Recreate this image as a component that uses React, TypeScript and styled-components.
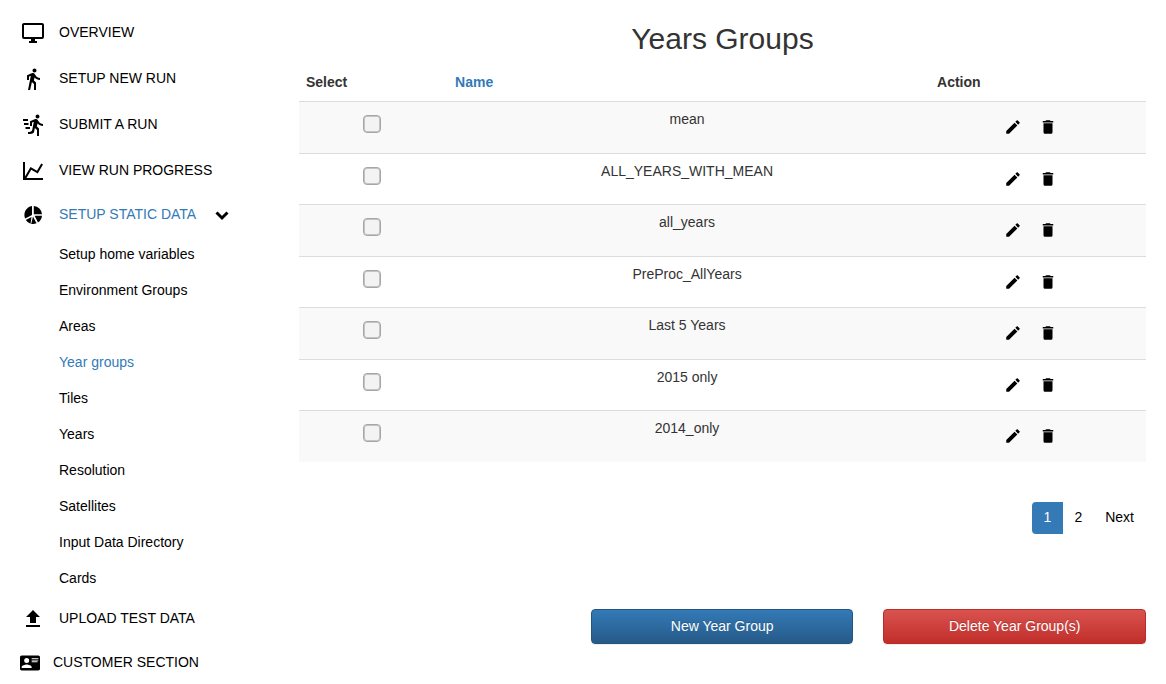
import React from "react";
import styled, { createGlobalStyle } from "styled-components";

const GlobalStyle = createGlobalStyle`
  *, *::before, *::after { box-sizing: border-box; }
  body {
    margin: 0;
    background: #fff;
    color: #333;
    font: 14px/20px "Liberation Sans", Arial, sans-serif;
  }
  a { color: inherit; text-decoration: none; }
`;

const Page = styled.div`
  display: flex;
  padding: 0 20px;
  gap: 28px;
`;

const IconBox = styled.svg<{ $size: number }>`
  display: block;
  flex: none;
  width: ${(p) => p.$size}px;
  height: ${(p) => p.$size}px;
  fill: #000;
`;

const Sidebar = styled.nav`
  flex: 0 0 251px;
  padding-top: 9px;
  color: #000;
`;

const menuHeights = { regular: 46, medium: 44, compact: 42 };

const MenuLink = styled.a<{
  $active?: boolean;
  $outdent?: boolean;
  $density?: keyof typeof menuHeights;
}>`
  display: flex;
  align-items: center;
  height: ${(p) => menuHeights[p.$density ?? "regular"]}px;
  gap: ${(p) => (p.$outdent ? 13 : 14)}px;
  padding-left: ${(p) => (p.$outdent ? 0 : 1)}px;
  && { color: ${(p) => (p.$active ? "#337ab7" : "#000")}; }
  svg { margin-top: 2px; }
`;

const Chevron = styled.svg`
  width: 14px;
  height: 14px;
  margin-left: 5px;
  fill: none;
  stroke: #000;
  stroke-width: 3;
`;

const SubMenu = styled.ul`
  margin: 1px 0 0;
  padding: 0 0 0 39px;
  list-style: none;
`;

const SubItem = styled.li<{ $active?: boolean }>`
  padding: 8px 0;
  color: ${(p) => (p.$active ? "#337ab7" : "#000")};
`;

const Main = styled.main`
  flex: 1;
  min-width: 0;
`;

const Title = styled.h2`
  margin: 22px 0 10px;
  font-size: 30px;
  font-weight: 400;
  line-height: 33px;
  text-align: center;
`;

const DataTable = styled.table`
  width: 100%;
  table-layout: fixed;
  border-collapse: separate;
  border-spacing: 0;
`;

const Head = styled.th<{ $width?: string }>`
  width: ${(p) => p.$width ?? "auto"};
  padding: 7px 7px 9px;
  text-align: left;
  a { color: #337ab7; }
`;

const Row = styled.tr`
  height: 51px;
  &:nth-child(odd) {
    height: 52px;
    background: #f9f9f9;
  }
`;

const Cell = styled.td`
  padding: 7px 12px 0 8px;
  border-top: 1px solid #ddd;
  text-align: center;
  vertical-align: top;
`;

const Check = styled.input`
  appearance: none;
  display: block;
  width: 18px;
  height: 18px;
  margin: 6px auto 0;
  border: 1px solid #a6a6a6;
  border-radius: 4px;
  background: #f3f3f3;
  box-shadow: inset 0 0 0 1px #c4c4c4;
  &:checked { background: #337ab7; }
`;

const Actions = styled.div`
  display: flex;
  justify-content: center;
  gap: 17px;
  padding: 9px 12px 0 0;
`;

const IconButton = styled.button`
  padding: 0;
  border: 0;
  background: none;
  cursor: pointer;
`;

const Pager = styled.nav`
  display: flex;
  justify-content: flex-end;
  margin-top: 40px;
`;

const PageLink = styled.a<{ $current?: boolean }>`
  margin-left: -1px;
  padding: 5px 12px 7px;
  border-radius: 4px 0 0 4px;
  && { color: ${(p) => (p.$current ? "#fff" : "#000")}; }
  background: ${(p) => (p.$current ? "#337ab7" : "transparent")};
`;

const ButtonRow = styled.div`
  display: grid;
  grid-template-columns: repeat(2, 31%);
  justify-content: end;
  gap: 30px;
  margin-top: 75px;
`;

const ActionButton = styled.button<{ $danger?: boolean }>`
  height: 35px;
  padding: 0 12px 1px;
  border: 1px solid ${(p) => (p.$danger ? "#b92c28" : "#245580")};
  border-radius: 4px;
  background: ${(p) =>
    p.$danger
      ? "linear-gradient(#d9534f, #c12e2a)"
      : "linear-gradient(#337ab7, #265a88)"};
  box-shadow: 0 1px 1px rgba(0, 0, 0, 0.075);
  color: #fff;
  font: inherit;
  text-shadow: 0 -1px 0 rgba(0, 0, 0, 0.2);
  cursor: pointer;
`;

const paths = {
  monitor:
    "M21,16H3V4H21M21,2H3C1.89,2 1,2.89 1,4V16A2,2 0 0,0 3,18H10V20H8V22H16V20H14V18H21A2,2 0 0,0 23,16V4C23,2.89 22.1,2 21,2Z",
  walk:
    "M13.5 5.5c1.1 0 2-.9 2-2s-.9-2-2-2-2 .9-2 2 .9 2 2 2zM9.8 8.9L7 23h2.1l1.8-8 2.1 2v6h2v-7.5l-2.1-2 .6-3C14.8 12 16.8 13 19 13v-2c-1.9 0-3.5-1-4.3-2.4l-1-1.6c-.4-.6-1-1-1.7-1-.3 0-.5.1-.8.1L6 8.3V13h2V9.6l1.8-.7",
  run:
    "M16.5,5.5A2,2 0 0,0 18.5,3.5A2,2 0 0,0 16.5,1.5A2,2 0 0,0 14.5,3.5A2,2 0 0,0 16.5,5.5M12.9,19.4L13.9,15L16,17V23H18V15.5L15.9,13.5L16.5,10.5C17.89,12.09 19.89,13 22,13V11C20.24,11.03 18.6,10.11 17.7,8.6L16.7,7C16.34,6.4 15.7,6 15,6C14.7,6 14.5,6.1 14.2,6.1L9,8.3V13H11V9.6L12.8,8.9L11.2,17Q10.5,19 7,19V21Q11.5,21 12.9,19.4M2,6H7V8H2ZM3,10H7.5V12H3ZM4.5,14H9V16H4.5Z",
  line:
    "M16,11.78L20.24,4.45L21.97,5.45L16.74,14.5L10.23,10.75L5.46,19H22V21H2V3H4V17.54L9.5,8L16,11.78Z",
  pie:
    "M12.8 3A9 9 0 0 1 21 11.2H12.8ZM11 3V12L4.2 15.6A9 9 0 0 1 11 3ZM4.8 17L10.5 14L9.5 20.7A9 9 0 0 1 4.8 17ZM12 13.6L15.5 20.3A9 9 0 0 1 10.2 20.9ZM13.6 12.8H21A9 9 0 0 1 17 19.5Z",
  upload: "M9,16V10H5L12,3L19,10H15V16H9M5,20V18H19V20H5Z",
  card:
    "M2,3H22C23.05,3 24,3.95 24,5V19C24,20.05 23.05,21 22,21H2C0.95,21 0,20.05 0,19V5C0,3.95 0.95,3 2,3M14,6V7H22V6H14M14,8V9H21.5L22,9V8H14M14,10V11H21V10H14M8,13.91C6,13.91 2,15 2,17V18H14V17C14,15 10,13.91 8,13.91M8,6A3,3 0 0,0 5,9A3,3 0 0,0 8,12A3,3 0 0,0 11,9A3,3 0 0,0 8,6Z",
  pencil:
    "M20.71,7.04C21.1,6.65 21.1,6 20.71,5.63L18.37,3.29C18,2.9 17.35,2.9 16.96,3.29L15.12,5.12L18.87,8.87M3,17.25V21H6.75L17.81,9.93L14.06,6.18L3,17.25Z",
  trash: "M19,4H15.5L14.5,3H9.5L8.5,4H5V6H19M6,19A2,2 0 0,0 8,21H16A2,2 0 0,0 18,19V7H6V19Z",
};

function Icon({ name, size = 24 }: { name: keyof typeof paths; size?: number }) {
  return (
    <IconBox $size={size} viewBox="0 0 24 24" aria-hidden="true">
      <path d={paths[name]} />
    </IconBox>
  );
}

const subItems = [
  "Setup home variables",
  "Environment Groups",
  "Areas",
  "Year groups",
  "Tiles",
  "Years",
  "Resolution",
  "Satellites",
  "Input Data Directory",
  "Cards",
];

const groups = [
  "mean",
  "ALL_YEARS_WITH_MEAN",
  "all_years",
  "PreProc_AllYears",
  "Last 5 Years",
  "2015 only",
  "2014_only",
];

export default function App() {
  return (
    <>
      <GlobalStyle />
      <Page>
        <Sidebar>
          <MenuLink href="#"><Icon name="monitor" />OVERVIEW</MenuLink>
          <MenuLink href="#"><Icon name="walk" />SETUP NEW RUN</MenuLink>
          <MenuLink href="#"><Icon name="run" />SUBMIT A RUN</MenuLink>
          <MenuLink href="#"><Icon name="line" />VIEW RUN PROGRESS</MenuLink>
          <MenuLink href="#" $active $density="compact">
            <Icon name="pie" />SETUP STATIC DATA
            <Chevron viewBox="0 0 14 14" aria-hidden="true"><path d="M1.5 4.5L7 10L12.5 4.5" /></Chevron>
          </MenuLink>
          <SubMenu>
            {subItems.map((item) => (
              <SubItem key={item} $active={item === "Year groups"}><a href="#">{item}</a></SubItem>
            ))}
          </SubMenu>
          <MenuLink href="#" $density="medium"><Icon name="upload" />UPLOAD TEST DATA</MenuLink>
          <MenuLink href="#" $density="medium" $outdent><Icon name="card" size={20} />CUSTOMER SECTION</MenuLink>
        </Sidebar>
        <Main>
          <Title>Years Groups</Title>
          <DataTable>
            <thead>
              <tr>
                <Head $width="17.6%">Select</Head>
                <Head><a href="#">Name</a></Head>
                <Head $width="25.5%">Action</Head>
              </tr>
            </thead>
            <tbody>
              {groups.map((name) => (
                <Row key={name}>
                  <Cell><Check type="checkbox" aria-label={`Select ${name}`} /></Cell>
                  <Cell>{name}</Cell>
                  <Cell>
                    <Actions>
                      <IconButton aria-label={`Edit ${name}`}><Icon name="pencil" size={18} /></IconButton>
                      <IconButton aria-label={`Delete ${name}`}><Icon name="trash" size={18} /></IconButton>
                    </Actions>
                  </Cell>
                </Row>
              ))}
            </tbody>
          </DataTable>
          <Pager aria-label="Pages">
            <PageLink href="#" $current>1</PageLink>
            <PageLink href="#">2</PageLink>
            <PageLink href="#">Next</PageLink>
          </Pager>
          <ButtonRow>
            <ActionButton>New Year Group</ActionButton>
            <ActionButton $danger>Delete Year Group(s)</ActionButton>
          </ButtonRow>
        </Main>
      </Page>
    </>
  );
}
